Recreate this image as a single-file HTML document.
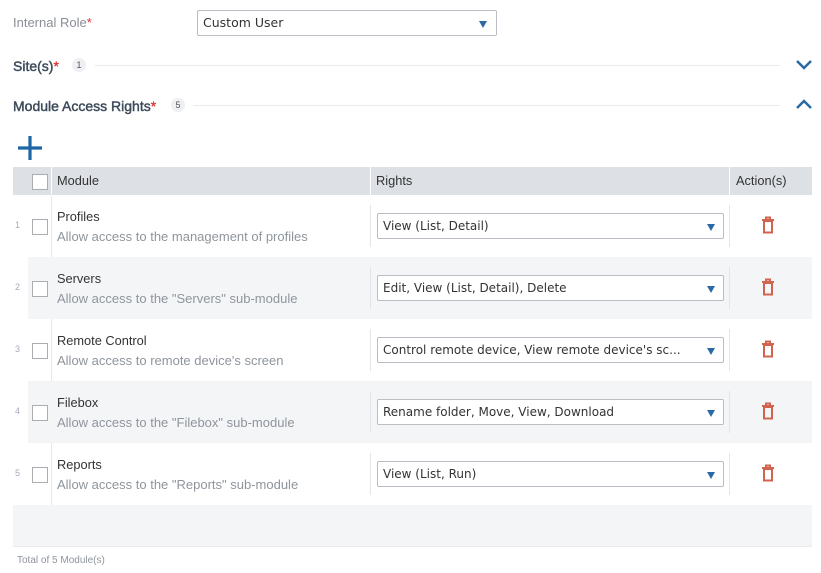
<!DOCTYPE html>
<html><head><meta charset="utf-8"><style>
*{box-sizing:border-box;margin:0;padding:0}
body{width:821px;height:573px;background:#fff;font-family:"Liberation Sans",sans-serif;position:relative;overflow:hidden;color:#333}
.a{position:absolute}
.lbl{color:#8a8f96;font-size:13px}
.red{color:#d33}
.sel{position:absolute;border:1px solid #b9bec4;border-radius:2px;background:#fff;font-family:"DejaVu Sans",sans-serif;font-size:12px;color:#333;padding-left:5px;line-height:24px;height:26px;white-space:nowrap;overflow:hidden}
.tri{position:absolute;right:8px;top:10px;width:0;height:0;border-left:4px solid transparent;border-right:4px solid transparent;border-top:7px solid #2a6aa4}
.h{font-size:14px;color:#3d4a5a;font-weight:normal;-webkit-text-stroke:0.45px #3d4a5a}
.h .red{-webkit-text-stroke:0.3px #d33}
.badge{position:absolute;width:14px;height:14px;border-radius:7px;background:#eef0f3;font-size:9px;color:#555;text-align:center;line-height:14px}
.line{position:absolute;height:1px;background:#e8eaed}
.cb{position:absolute;width:16px;height:16px;border:1px solid #a9adb2;background:#fff}
.row{position:absolute;left:13px;width:799px;height:62px}
.num{position:absolute;left:2px;font-size:9px;color:#aab}
.t1{position:absolute;left:44px;top:14px;font-size:12.8px;color:#333}
.t2{position:absolute;left:44px;top:34px;font-size:13px;color:#8e959c}
</style></head><body>
<div class="a lbl" style="left:13px;top:15px">Internal Role<span class="red">*</span></div>
<div class="sel" style="left:197px;top:10px;width:300px;font-family:'DejaVu Sans',sans-serif;font-size:12.5px">Custom User<span class="tri" style="right:9px"></span></div>

<div class="a h" style="left:13px;top:58px">Site(s)<span class="red">*</span></div>
<div class="badge" style="left:72px;top:58px">1</div>
<div class="line" style="left:95px;top:65px;width:685px"></div>
<svg class="a" style="left:795px;top:58px" width="18" height="12"><path d="M2 3 L9 10 L16 3" stroke="#2a6aa4" stroke-width="2.5" fill="none"/></svg>

<div class="a h" style="left:13px;top:98px">Module Access Rights<span class="red">*</span></div>
<div class="badge" style="left:171px;top:98px">5</div>
<div class="line" style="left:193px;top:105px;width:587px"></div>
<svg class="a" style="left:795px;top:98px" width="18" height="12"><path d="M2 10 L9 3 L16 10" stroke="#2a6aa4" stroke-width="2.5" fill="none"/></svg>

<svg class="a" style="left:17px;top:135px" width="26" height="26"><path d="M13 1V25M1 13H25" stroke="#1f66a6" stroke-width="3.2"/></svg>

<div class="a" style="left:13px;top:167px;width:799px;height:28px;background:#dde1e5"></div>
<div class="cb" style="left:32px;top:174px"></div>
<div class="a" style="left:51px;top:167px;width:1px;height:28px;background:#fff"></div>
<div class="a" style="left:57px;top:173px;font-size:12.8px;color:#333">Module</div>
<div class="a" style="left:370px;top:167px;width:1px;height:28px;background:#fff"></div>
<div class="a" style="left:376px;top:173px;font-size:12.8px;color:#333">Rights</div>
<div class="a" style="left:729px;top:167px;width:1px;height:28px;background:#fff"></div>
<div class="a" style="left:736px;top:173px;font-size:12.8px;color:#333">Action(s)</div>

<div class="a" style="left:51px;top:195px;width:1px;height:310px;background:#e6e8eb"></div>

<div class="row" style="top:195px"><div class="num" style="top:25px">1</div><div class="cb" style="left:19px;top:24px"></div><div class="t1">Profiles</div><div class="t2">Allow access to the management of profiles</div></div>
<div class="row" style="top:257px;background:#f4f5f7;left:28px;width:784px"></div>
<div class="row" style="top:257px"><div class="num" style="top:25px">2</div><div class="cb" style="left:19px;top:24px"></div><div class="t1">Servers</div><div class="t2">Allow access to the "Servers" sub-module</div></div>
<div class="row" style="top:319px"><div class="num" style="top:25px">3</div><div class="cb" style="left:19px;top:24px"></div><div class="t1">Remote Control</div><div class="t2">Allow access to remote device's screen</div></div>
<div class="row" style="top:381px;background:#f4f5f7;left:28px;width:784px"></div>
<div class="row" style="top:381px"><div class="num" style="top:25px">4</div><div class="cb" style="left:19px;top:24px"></div><div class="t1">Filebox</div><div class="t2">Allow access to the "Filebox" sub-module</div></div>
<div class="row" style="top:443px"><div class="num" style="top:25px">5</div><div class="cb" style="left:19px;top:24px"></div><div class="t1">Reports</div><div class="t2">Allow access to the "Reports" sub-module</div></div>

<div class="a" style="left:370px;top:205px;width:1px;height:42px;background:#e3e5e8"></div>
<div class="a" style="left:370px;top:267px;width:1px;height:42px;background:#e3e5e8"></div>
<div class="a" style="left:370px;top:329px;width:1px;height:42px;background:#e3e5e8"></div>
<div class="a" style="left:370px;top:391px;width:1px;height:42px;background:#e3e5e8"></div>
<div class="a" style="left:370px;top:453px;width:1px;height:42px;background:#e3e5e8"></div>
<div class="a" style="left:729px;top:205px;width:1px;height:42px;background:#e3e5e8"></div>
<div class="a" style="left:729px;top:267px;width:1px;height:42px;background:#e3e5e8"></div>
<div class="a" style="left:729px;top:329px;width:1px;height:42px;background:#e3e5e8"></div>
<div class="a" style="left:729px;top:391px;width:1px;height:42px;background:#e3e5e8"></div>
<div class="a" style="left:729px;top:453px;width:1px;height:42px;background:#e3e5e8"></div>

<div class="sel" style="left:377px;top:213px;width:347px">View (List, Detail)<span class="tri"></span></div>
<div class="sel" style="left:377px;top:275px;width:347px">Edit, View (List, Detail), Delete<span class="tri"></span></div>
<div class="sel" style="left:377px;top:337px;width:347px">Control remote device, View remote device's sc...<span class="tri"></span></div>
<div class="sel" style="left:377px;top:399px;width:347px">Rename folder, Move, View, Download<span class="tri"></span></div>
<div class="sel" style="left:377px;top:461px;width:347px">View (List, Run)<span class="tri"></span></div>

<svg class="a" style="left:761px;top:216px" width="14" height="18"><g fill="none" stroke="#d0644f" stroke-width="2"><path d="M1 4H13M5 4V1.5H9V4"/><rect x="3" y="5" width="8" height="11.5"/></g></svg>
<svg class="a" style="left:761px;top:278px" width="14" height="18"><g fill="none" stroke="#d0644f" stroke-width="2"><path d="M1 4H13M5 4V1.5H9V4"/><rect x="3" y="5" width="8" height="11.5"/></g></svg>
<svg class="a" style="left:761px;top:340px" width="14" height="18"><g fill="none" stroke="#d0644f" stroke-width="2"><path d="M1 4H13M5 4V1.5H9V4"/><rect x="3" y="5" width="8" height="11.5"/></g></svg>
<svg class="a" style="left:761px;top:402px" width="14" height="18"><g fill="none" stroke="#d0644f" stroke-width="2"><path d="M1 4H13M5 4V1.5H9V4"/><rect x="3" y="5" width="8" height="11.5"/></g></svg>
<svg class="a" style="left:761px;top:464px" width="14" height="18"><g fill="none" stroke="#d0644f" stroke-width="2"><path d="M1 4H13M5 4V1.5H9V4"/><rect x="3" y="5" width="8" height="11.5"/></g></svg>

<div class="a" style="left:13px;top:505px;width:799px;height:42px;background:#f4f5f7;border-bottom:1px solid #e8eaed"></div>
<div class="a" style="left:17px;top:555px;font-size:10px;color:#8e959c">Total of 5 Module(s)</div>
</body></html>
